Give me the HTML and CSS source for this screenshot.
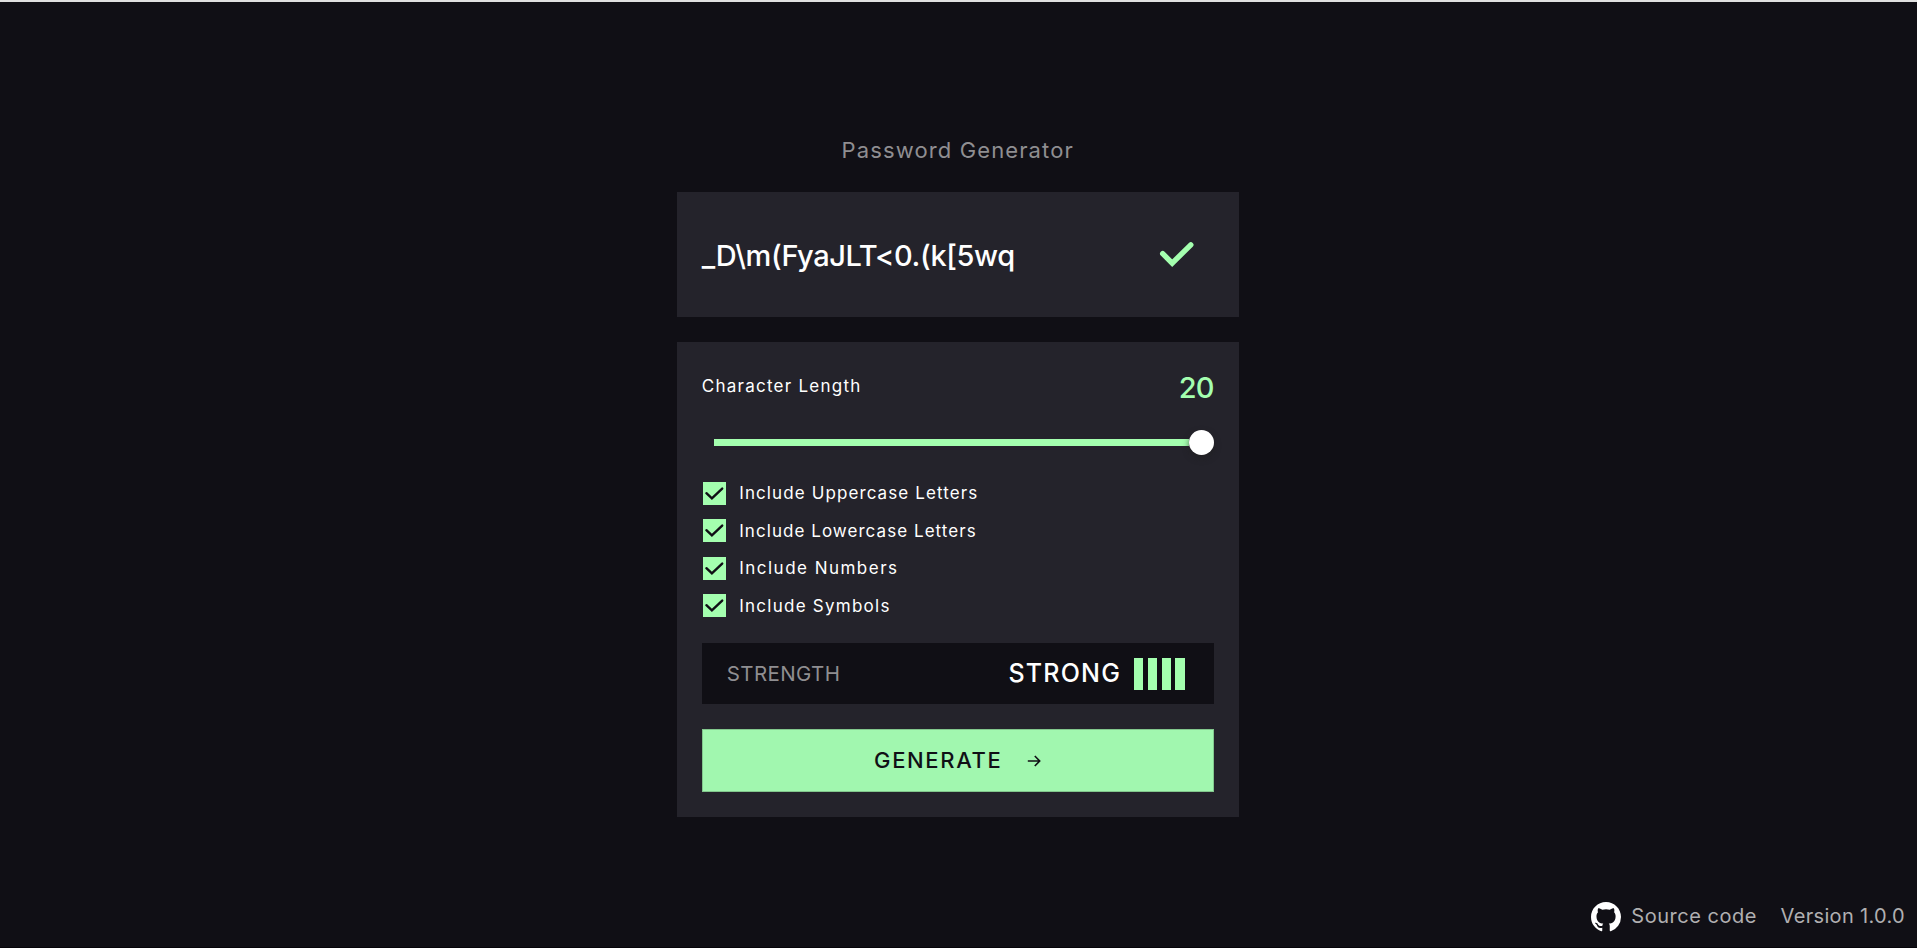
FILE: index.html
```html
<!DOCTYPE html>
<html lang="en">
<head>
<meta charset="utf-8">
<title>Password Generator</title>
<link rel="stylesheet" href="styles.css">
</head>
<body>
<div class="page">
  <main class="generator">
    <h1 class="title">Password Generator</h1>
    <section class="card result">
      <span class="password">_D\m(FyaJLT&lt;0.(k[5wq</span>
      <svg class="copied" width="36" height="28" viewBox="0 0 36 28"><path d="M3.7 13.7 L13.2 23.2 L31.8 4.8" fill="none" stroke="#a4ffaf" stroke-width="5.4" stroke-linecap="round" stroke-linejoin="miter"/></svg>
    </section>
    <section class="card settings">
      <div class="length">
        <span class="length-label">Character Length</span>
        <span class="length-value">20</span>
      </div>
      <div class="slider"><div class="track"></div><div class="thumb"></div></div>
      <ul class="options">
        <li class="option"><span class="box"><svg width="23" height="23" viewBox="0 0 23 23"><path d="M3.4 11.2 L8.9 16.3 L19.2 6.6"/></svg></span><span class="upper">Include Uppercase Letters</span></li>
        <li class="option"><span class="box"><svg width="23" height="23" viewBox="0 0 23 23"><path d="M3.4 11.2 L8.9 16.3 L19.2 6.6"/></svg></span><span class="lower">Include Lowercase Letters</span></li>
        <li class="option"><span class="box"><svg width="23" height="23" viewBox="0 0 23 23"><path d="M3.4 11.2 L8.9 16.3 L19.2 6.6"/></svg></span><span class="numbers">Include Numbers</span></li>
        <li class="option"><span class="box"><svg width="23" height="23" viewBox="0 0 23 23"><path d="M3.4 11.2 L8.9 16.3 L19.2 6.6"/></svg></span><span class="symbols">Include Symbols</span></li>
      </ul>
      <div class="strength">
        <span class="strength-label">STRENGTH</span>
        <span class="strength-value">STRONG</span>
        <span class="bars"><i></i><i></i><i></i><i></i></span>
      </div>
      <button class="generate" type="button">
        <span>GENERATE</span>
        <svg width="14" height="12" viewBox="0 0 14 12"><path d="M.8 6H12.6M7.8 1L12.7 6L7.8 11" fill="none" stroke="#100f15" stroke-width="1.6"/></svg>
      </button>
    </section>
  </main>
  <footer class="footer">
    <svg width="30" height="30" viewBox="0 0 16 16"><path fill="#fff" d="M8 0C3.58 0 0 3.58 0 8c0 3.54 2.29 6.53 5.47 7.59.4.07.55-.17.55-.38 0-.19-.01-.82-.01-1.49-2.01.37-2.53-.49-2.69-.94-.09-.23-.48-.94-.82-1.13-.28-.15-.68-.52-.01-.53.63-.01 1.08.58 1.23.82.72 1.21 1.87.87 2.33.66.07-.52.28-.87.51-1.07-1.78-.2-3.64-.89-3.64-3.95 0-.87.31-1.59.82-2.15-.08-.2-.36-1.02.08-2.12 0 0 .67-.21 2.2.82.64-.18 1.32-.27 2-.27s1.36.09 2 .27c1.53-1.04 2.2-.82 2.2-.82.44 1.1.16 1.92.08 2.12.51.56.82 1.27.82 2.15 0 3.07-1.87 3.75-3.65 3.95.29.25.54.73.54 1.48 0 1.07-.01 1.93-.01 2.2 0 .21.15.46.55.38A8.01 8.01 0 0 0 16 8c0-4.42-3.58-8-8-8z"/></svg>
    <span class="source">Source code</span>
    <span class="version">Version 1.0.0</span>
  </footer>
</div>
</body>
</html>
```
FILE: styles.css
```css
* {
  box-sizing: border-box;
}

body {
  margin: 0;
  background: #100f15;
  color: #fff;
  font-family: Inter, "Liberation Sans", sans-serif;
}

.page {
  display: flex;
  flex-direction: column;
  align-items: center;
  justify-content: space-between;
  height: 948px;
  padding: 133px 12px 16px;
  border-top: 2px solid #e0e0e0;
  border-bottom: 1px solid #060409;
}

.generator {
  width: 562px;
  margin-right: 1.5px;
}

.title {
  margin: 0 0 26.7px;
  color: #8f8e91;
  font-size: 22px;
  font-weight: 400;
  line-height: 30px;
  letter-spacing: 1.12px;
  text-align: center;
}

.card {
  background: #24232b;
}

.result {
  display: flex;
  align-items: center;
  justify-content: space-between;
  height: 125px;
  margin-bottom: 25px;
  padding: 0 44px 0 25px;
}

.password {
  padding-top: 2px;
  font-size: 29px;
  font-weight: 500;
  letter-spacing: -0.4px;
}

.settings {
  height: 475px;
  padding: 25px 25px 24px;
}

.length {
  display: flex;
  align-items: center;
  justify-content: space-between;
  height: 40px;
}

.length-label {
  padding-bottom: 2px;
  font-size: 17px;
  letter-spacing: 1.25px;
}

.length-value {
  padding-top: 1px;
  color: #a4ffaf;
  font-size: 29px;
  font-weight: 500;
  letter-spacing: -0.8px;
}

.slider {
  display: flex;
  align-items: center;
  height: 25px;
  margin: 23.5px 0 19.5px;
  padding-left: 12px;
}

.track {
  flex: 1;
  height: 6.5px;
  background: #a4ffaf;
}

.thumb {
  width: 25px;
  height: 25px;
  border-radius: 50%;
  background: #fff;
  box-shadow: 0 3px 6px rgba(32, 32, 32, 0.7);
}

.options {
  margin: 0 0 18px;
  padding: 0;
  list-style: none;
}

.option {
  display: flex;
  align-items: center;
  gap: 13.5px;
  height: 37.5px;
  padding-left: 1px;
  font-size: 17px;
}

.box {
  width: 23px;
  height: 23px;
  background: #a4ffaf;
}

.box svg {
  display: block;
}

.box path {
  fill: none;
  stroke: #100f15;
  stroke-width: 2.4;
  stroke-linecap: round;
}

.upper {
  letter-spacing: 1.1px;
}

.lower {
  letter-spacing: 1.05px;
}

.numbers {
  letter-spacing: 1.48px;
}

.symbols {
  letter-spacing: 1.25px;
}

.strength {
  display: flex;
  align-items: center;
  height: 61px;
  margin-bottom: 25px;
  padding: 0 29px 0 25px;
  background: #100f15;
}

.strength-label {
  margin-right: auto;
  color: #8f8e91;
  font-size: 20.5px;
  letter-spacing: 0.39px;
}

.strength-value {
  margin-right: 13px;
  font-size: 25px;
  font-weight: 500;
  letter-spacing: 1.2px;
}

.bars {
  display: flex;
  gap: 4.5px;
  padding-top: 1px;
}

.bars i {
  width: 9.3px;
  height: 32px;
  background: #a4ffaf;
}

.generate {
  display: flex;
  align-items: center;
  justify-content: center;
  gap: 25px;
  width: 100%;
  height: 63px;
  padding: 0;
  border: 1px solid #82c78d;
  background: #a1f7af;
  color: #100f15;
  font-family: inherit;
  font-size: 22px;
  font-weight: 500;
  letter-spacing: 1.65px;
}

.generate svg {
  margin-top: 1px;
}

.footer {
  display: flex;
  align-items: center;
  align-self: flex-end;
  color: #b0afb1;
  font-size: 20px;
}

.footer svg {
  position: relative;
  top: 1px;
}

.source {
  margin: 0 23.5px 0 10.5px;
  letter-spacing: 0.53px;
}

.version {
  letter-spacing: 0.33px;
}
```
